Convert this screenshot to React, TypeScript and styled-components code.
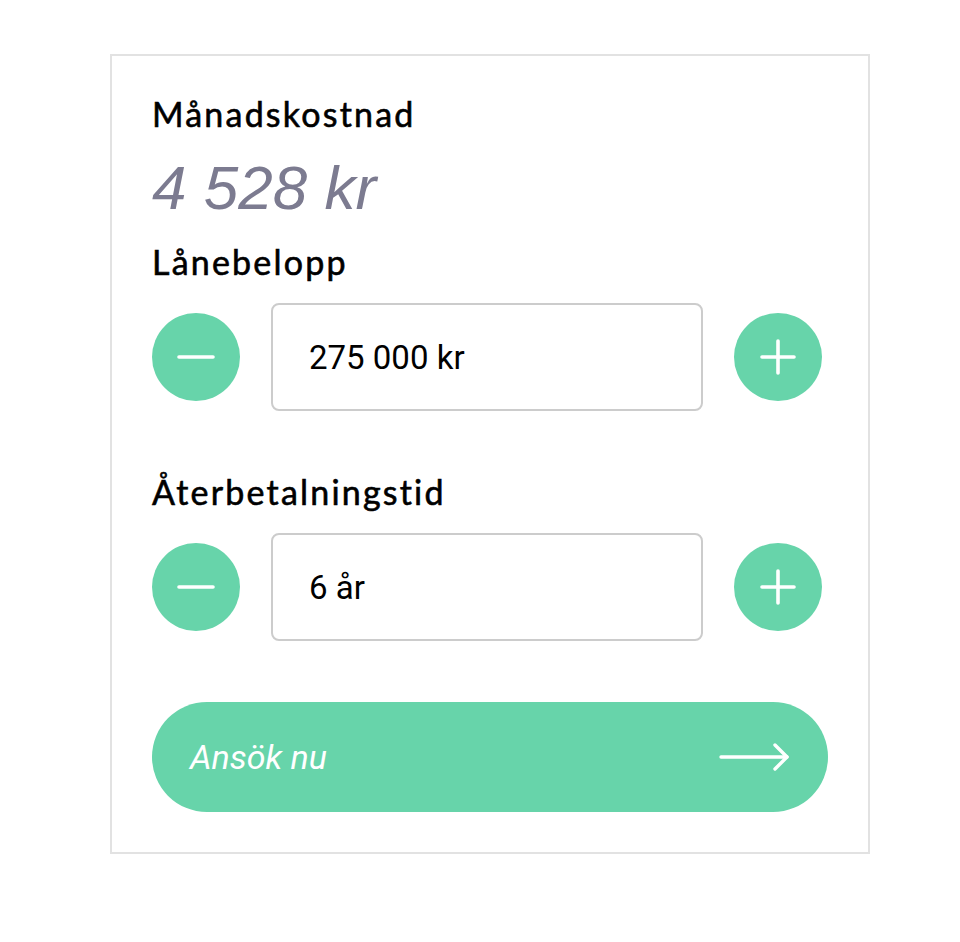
import React, { useState } from "react";
import styled, { createGlobalStyle } from "styled-components";

const GREEN = "#67d4aa";

const GlobalStyle = createGlobalStyle`
  body {
    margin: 0;
    background: #ffffff;
    font-family: "Lato", "Noto Sans", sans-serif;
  }
`;

const Page = styled.div`
  padding: 54px 0 0 110px;
`;

const Card = styled.div`
  width: 760px;
  box-sizing: border-box;
  border: 2px solid #e2e2e2;
  padding: 38px 40px 40px;
  display: flex;
  flex-direction: column;
`;

const Label = styled.div<{ $gap: number; $top?: number }>`
  font-family: "Lato", "Noto Sans", sans-serif;
  font-size: 34px;
  line-height: 40px;
  letter-spacing: 2.2px;
  -webkit-text-stroke: 0.6px #000;
  color: #000;
  margin-top: ${(p) => p.$top ?? 0}px;
  margin-bottom: ${(p) => p.$gap}px;
`;

const Amount = styled.div`
  font-family: "Liberation Sans", Arial, sans-serif;
  font-style: italic;
  font-size: 62px;
  line-height: 64px;
  color: #7c7b90;
  margin-bottom: 22px;
`;

const StepperRow = styled.div`
  display: grid;
  grid-template-columns: 88px 432px 88px;
  column-gap: 31px;
  align-items: center;
`;

const RoundButton = styled.button`
  width: 88px;
  height: 88px;
  border-radius: 50%;
  border: none;
  padding: 0;
  background: ${GREEN};
  display: flex;
  align-items: center;
  justify-content: center;
  cursor: pointer;
`;

const ValueBox = styled.div`
  height: 108px;
  box-sizing: border-box;
  border: 2px solid #cccccc;
  border-radius: 8px;
  padding-left: 36px;
  display: flex;
  align-items: center;
  font-family: Roboto, "Liberation Sans", sans-serif;
  font-size: 33px;
  color: #000;
`;

const ApplyButton = styled.button`
  margin-top: 61px;
  height: 110px;
  border: none;
  border-radius: 55px;
  background: ${GREEN};
  padding: 0 37px 0 38px;
  display: flex;
  align-items: center;
  justify-content: space-between;
  cursor: pointer;
  font-family: Roboto, "Liberation Sans", sans-serif;
  font-style: italic;
  font-size: 34px;
  color: #ffffff;
`;

function MinusIcon() {
  return (
    <svg width="40" height="40" viewBox="0 0 40 40">
      <line x1="3" y1="20" x2="37" y2="20" stroke="#fff" strokeWidth="3.6" strokeLinecap="round" />
    </svg>
  );
}

function PlusIcon() {
  return (
    <svg width="40" height="40" viewBox="0 0 40 40">
      <line x1="4" y1="20" x2="36" y2="20" stroke="#fff" strokeWidth="3.6" strokeLinecap="round" />
      <line x1="20" y1="4" x2="20" y2="36" stroke="#fff" strokeWidth="3.6" strokeLinecap="round" />
    </svg>
  );
}

function ArrowIcon() {
  return (
    <svg width="72" height="30" viewBox="0 0 72 30">
      <line x1="2" y1="15" x2="68" y2="15" stroke="#fff" strokeWidth="3.4" strokeLinecap="round" />
      <polyline points="56,3 68,15 56,27" fill="none" stroke="#fff" strokeWidth="3.4" strokeLinecap="round" strokeLinejoin="round" />
    </svg>
  );
}

interface StepperProps {
  value: string;
  onDown: () => void;
  onUp: () => void;
}

function Stepper({ value, onDown, onUp }: StepperProps) {
  return (
    <StepperRow>
      <RoundButton onClick={onDown} aria-label="Minska">
        <MinusIcon />
      </RoundButton>
      <ValueBox>{value}</ValueBox>
      <RoundButton onClick={onUp} aria-label="Öka">
        <PlusIcon />
      </RoundButton>
    </StepperRow>
  );
}

const fmt = (n: number) => n.toString().replace(/\B(?=(\d{3})+(?!\d))/g, " ");

export default function App() {
  const [amount, setAmount] = useState(275000);
  const [years, setYears] = useState(6);

  return (
    <Page>
      <GlobalStyle />
      <Card>
        <Label $gap={22}>Månadskostnad</Label>
        <Amount>4 528 kr</Amount>
        <Label $gap={21}>Lånebelopp</Label>
        <Stepper
          value={`${fmt(amount)} kr`}
          onDown={() => setAmount((a) => Math.max(5000, a - 5000))}
          onUp={() => setAmount((a) => a + 5000)}
        />
        <Label $gap={21} $top={61}>Återbetalningstid</Label>
        <Stepper
          value={`${years} år`}
          onDown={() => setYears((y) => Math.max(1, y - 1))}
          onUp={() => setYears((y) => y + 1)}
        />
        <ApplyButton>
          <span>Ansök nu</span>
          <ArrowIcon />
        </ApplyButton>
      </Card>
    </Page>
  );
}
